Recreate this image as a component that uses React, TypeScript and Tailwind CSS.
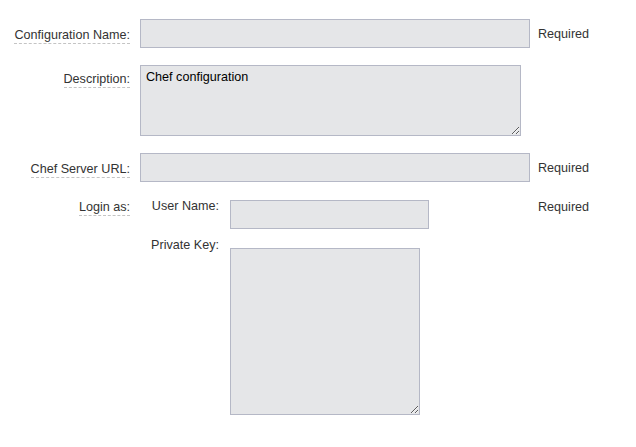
const font = { fontFamily: '"Liberation Sans", Arial, sans-serif' }

function Label({ text, className = "" }: { text: string; className?: string }) {
	return (
		<div className={`pr-[10px] text-right ${className}`}>
			<span className="inline-block border-b border-dashed border-[#c4c4c4] leading-[16px]">
				{text}
			</span>
		</div>
	)
}

function Required({ className = "" }: { className?: string }) {
	return <div className={`leading-[16px] ${className}`}>Required</div>
}

const field =
	"block h-[29px] border border-[#b5b8c6] bg-[#e5e6e8] px-[5px] text-[12.6px] text-black outline-none"
const area =
	"block border border-[#b5b8c6] bg-[#e5e6e8] px-[5px] pt-[3px] text-[12.6px] leading-[16px] text-black outline-none"

export default function App() {
	return (
		<div
			className="h-[447px] w-[636px] bg-white text-[12.6px] text-[#333]"
			style={font}
		>
			<div className="grid grid-cols-[140px_398px_auto] pt-[19px]">
				<Label text="Configuration Name:" className="pt-[7px]" />
				<input className={`${field} w-[390px]`} style={font} />
				<Required className="pt-[7px]" />
			</div>

			<div className="mt-[17px] grid grid-cols-[140px_398px_auto]">
				<Label text="Description:" className="pt-[5px]" />
				<textarea
					className={`${area} h-[71px] w-[381px]`}
					style={font}
					defaultValue="Chef configuration"
				/>
			</div>

			<div className="mt-[17px] grid grid-cols-[140px_398px_auto]">
				<Label text="Chef Server URL:" className="pt-[7px]" />
				<input className={`${field} w-[390px]`} style={font} />
				<Required className="pt-[7px]" />
			</div>

			<div className="mt-[16px] grid grid-cols-[140px_398px_auto]">
				<Label text="Login as:" />
				<div className="grid grid-cols-[90px_auto] items-start">
					<div className="pr-[11px] text-right leading-[16px]">User Name:</div>
					<input className={`${field} mt-[2px] w-[199px]`} style={font} />
					<div className="mt-[8px] pr-[11px] text-right leading-[16px]">
						Private Key:
					</div>
					<div />
					<div />
					<textarea
						className={`${area} -mt-[5px] h-[167px] w-[190px]`}
						style={font}
					/>
				</div>
				<Required className="pt-[1px]" />
			</div>
		</div>
	)
}
